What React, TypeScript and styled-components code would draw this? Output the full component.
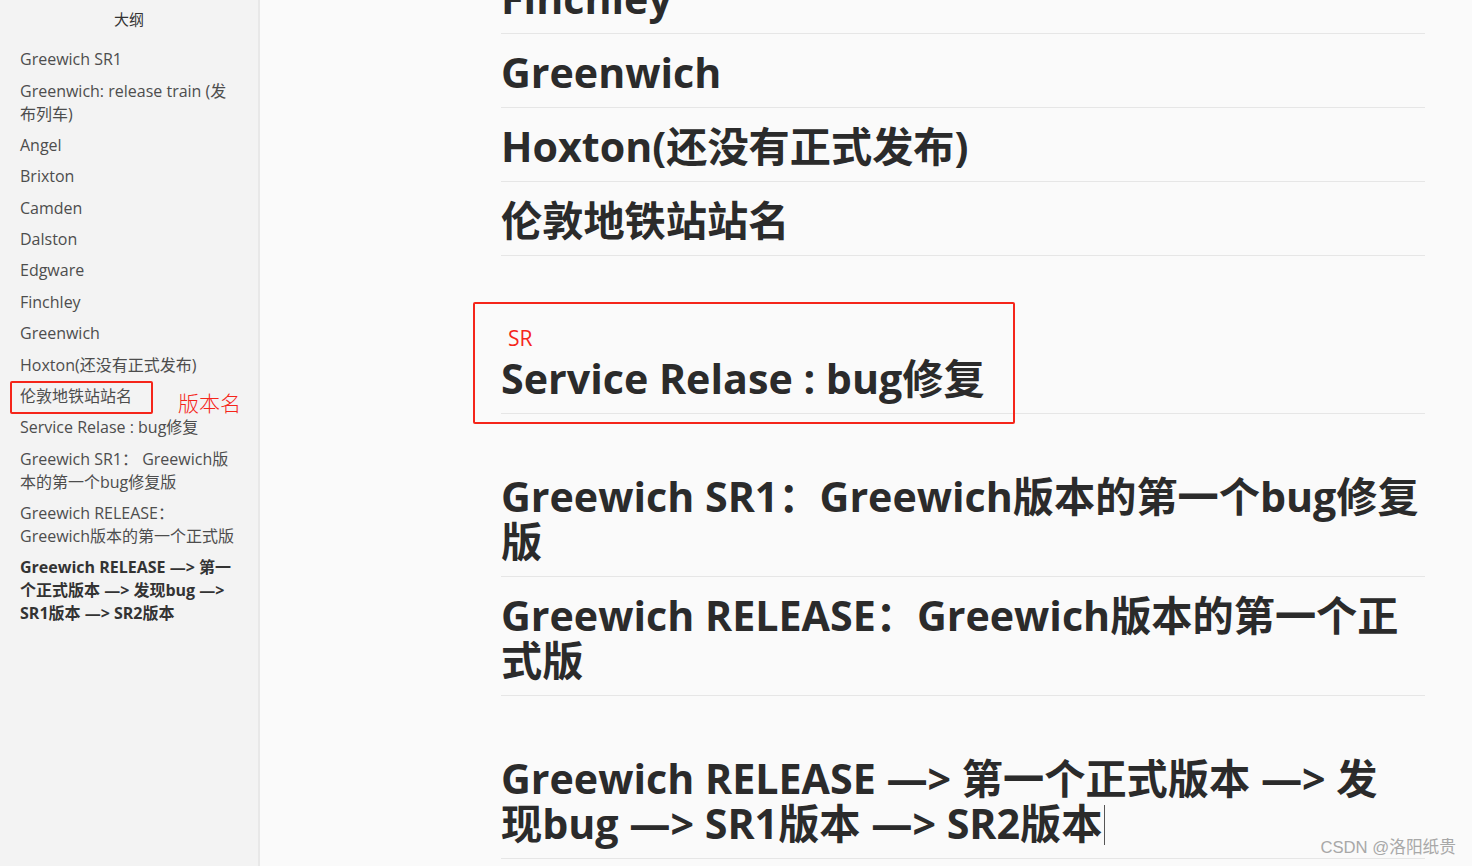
import { FC } from 'react'
import styled, { createGlobalStyle } from 'styled-components'

const GlobalStyle = createGlobalStyle`
  html, body {
    margin: 0;
    padding: 0;
    background: #fafafa;
  }
  body {
    font-family: 'Open Sans', 'Noto Sans CJK SC', sans-serif;
    overflow: hidden;
  }
`

const FONT = `'Open Sans', 'Noto Sans CJK SC', sans-serif`
const RED = '#f5251a'

const Page = styled.div`
  display: flex;
  width: 1472px;
  height: 866px;
  overflow: hidden;
`

const Sidebar = styled.aside`
  flex: 0 0 258px;
  background: #f3f3f3;
  border-right: 2px solid #e8e8e8;
  padding-top: 8px;
  font-family: ${FONT};
`

const OutlineTitle = styled.div`
  text-align: center;
  font-size: 15px;
  line-height: 23px;
  color: #333;
  margin-bottom: 13px;
`

const OutlineList = styled.ul`
  list-style: none;
  margin: 0;
  padding: 0;
`

const OutlineItem = styled.li<{ $active?: boolean }>`
  position: relative;
  padding: 4.2px 20px;
  font-size: 16px;
  line-height: 23px;
  color: ${({ $active }) => ($active ? '#333' : '#4d4d4d')};
  font-weight: ${({ $active }) => ($active ? 700 : 400)};
`

const ItemMark = styled.span`
  position: absolute;
  left: 10px;
  top: 0;
  width: 143px;
  height: 33px;
  box-sizing: border-box;
  border: 2px solid ${RED};
  border-radius: 2px;
`

const MarkLabel = styled.span`
  position: absolute;
  left: 178px;
  top: 8px;
  font-size: 21px;
  line-height: 26px;
  color: ${RED};
  font-family: 'Noto Sans CJK SC', sans-serif;
  font-weight: 300;
  white-space: nowrap;
`

const Main = styled.main`
  position: relative;
  flex: 1;
  overflow: hidden;
  padding-left: 241px;
`

const Article = styled.article`
  display: flow-root;
  width: 924px;
  font-family: ${FONT};
  color: #333;
`

const Heading = styled.h2<{ $top?: number }>`
  margin: ${({ $top }) => $top ?? 16}px 0 0;
  padding-bottom: 12px;
  border-bottom: 1px solid #e6e6e6;
  font-size: 41.2px;
  line-height: 45px;
  font-weight: 700;
  color: #2b2b2b;
`

const NoWrap = styled.span`
  white-space: nowrap;
`

const Section = styled.section`
  position: relative;
  padding-top: 68px;
`

const Note = styled.p`
  margin: 0;
  padding-left: 7px;
  font-size: 21px;
  line-height: 28px;
  color: ${RED};
`

const Frame = styled.div`
  position: absolute;
  left: -28px;
  top: 46px;
  width: 542px;
  height: 122px;
  box-sizing: border-box;
  border: 2px solid ${RED};
  border-radius: 2px;
`

const Caret = styled.span`
  display: inline-block;
  width: 1px;
  height: 40px;
  margin-left: 2px;
  background: #555;
  vertical-align: -6px;
`

const Watermark = styled.div`
  position: absolute;
  right: 16px;
  bottom: 8px;
  font-family: 'Liberation Sans', 'Noto Sans CJK SC', sans-serif;
  font-size: 16.7px;
  line-height: 20px;
  color: #a8a8a8;
`

const outline = [
  'Greewich SR1',
  'Greenwich: release train (发布列车)',
  'Angel',
  'Brixton',
  'Camden',
  'Dalston',
  'Edgware',
  'Finchley',
  'Greenwich',
  'Hoxton(还没有正式发布)',
  '伦敦地铁站站名',
  'Service Relase : bug修复',
  'Greewich SR1： Greewich版本的第一个bug修复版',
  'Greewich RELEASE：Greewich版本的第一个正式版',
  'Greewich RELEASE —> 第一个正式版本 —> 发现bug —> SR1版本 —> SR2版本',
]

const App: FC = () => {
  return (
    <Page>
      <GlobalStyle />
      <Sidebar>
        <OutlineTitle>大纲</OutlineTitle>
        <OutlineList>
          {outline.map((text, i) => (
            <OutlineItem key={text} $active={i === outline.length - 1}>
              {text}
              {text === '伦敦地铁站站名' && (
                <>
                  <ItemMark />
                  <MarkLabel>版本名</MarkLabel>
                </>
              )}
            </OutlineItem>
          ))}
        </OutlineList>
      </Sidebar>

      <Main>
        <Article>
          <Heading $top={-24}>Finchley</Heading>
          <Heading>Greenwich</Heading>
          <Heading>Hoxton(还没有正式发布)</Heading>
          <Heading>伦敦地铁站站名</Heading>

          <Section>
            <Note>SR</Note>
            <Heading $top={4}>Service Relase : bug修复</Heading>
            <Frame />
          </Section>

          <Heading $top={60}>Greewich SR1：Greewich版本的第一个bug修复版</Heading>
          <Heading>Greewich RELEASE：Greewich版本的第一个正式版</Heading>
          <Heading $top={60}>
            Greewich RELEASE —&gt; 第一个正式版本 —&gt; 发<NoWrap>现bug</NoWrap> —&gt; SR1版本 —&gt; SR2版本
            <Caret />
          </Heading>
        </Article>
        <Watermark>CSDN @洛阳纸贵</Watermark>
      </Main>
    </Page>
  )
}

export default App
